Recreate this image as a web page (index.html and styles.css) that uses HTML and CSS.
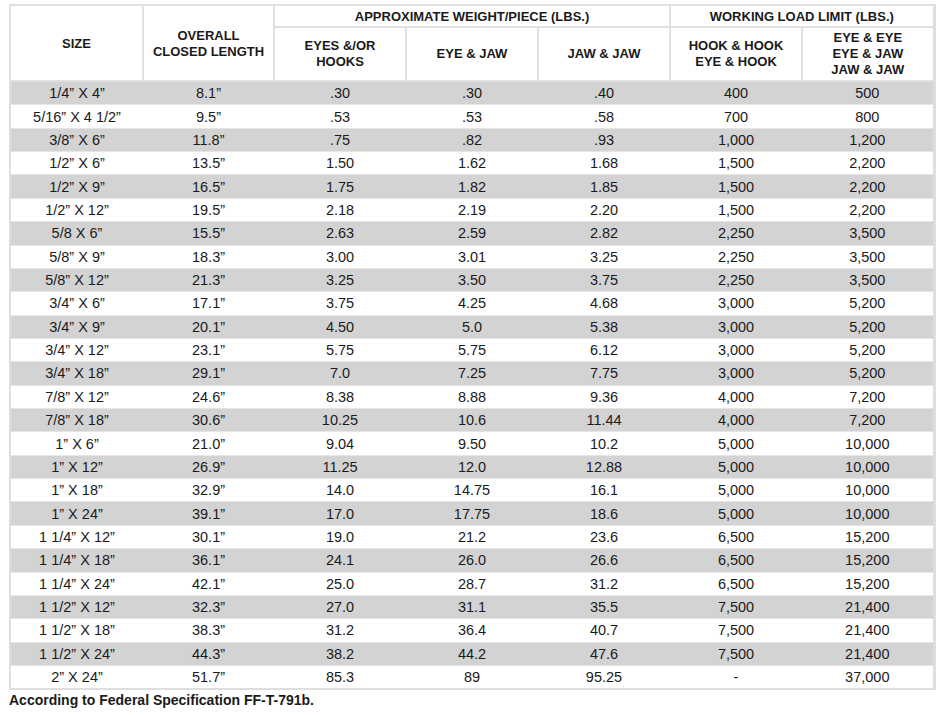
FILE: index.html
```html
<!DOCTYPE html>
<html>
<head>
<meta charset="utf-8">
<link rel="stylesheet" href="styles.css">
</head>
<body>
<table class="spec">
  <colgroup>
    <col class="c-size"><col class="c-len"><col class="c-w"><col class="c-w"><col class="c-w"><col class="c-w"><col class="c-w">
  </colgroup>
  <thead>
    <tr class="h1">
      <th rowspan="2">SIZE</th>
      <th rowspan="2">OVERALL<br>CLOSED LENGTH</th>
      <th colspan="3">APPROXIMATE WEIGHT/PIECE (LBS.)</th>
      <th colspan="2">WORKING LOAD LIMIT (LBS.)</th>
    </tr>
    <tr class="h2">
      <th>EYES &amp;/OR<br>HOOKS</th>
      <th>EYE &amp; JAW</th>
      <th>JAW &amp; JAW</th>
      <th>HOOK &amp; HOOK<br>EYE &amp; HOOK</th>
      <th>EYE &amp; EYE<br>EYE &amp; JAW<br>JAW &amp; JAW</th>
    </tr>
  </thead>
  <tbody>
    <tr><td>1/4” X 4”</td><td>8.1”</td><td>.30</td><td>.30</td><td>.40</td><td>400</td><td>500</td></tr>
    <tr><td>5/16” X 4 1/2”</td><td>9.5”</td><td>.53</td><td>.53</td><td>.58</td><td>700</td><td>800</td></tr>
    <tr><td>3/8” X 6”</td><td>11.8”</td><td>.75</td><td>.82</td><td>.93</td><td>1,000</td><td>1,200</td></tr>
    <tr><td>1/2” X 6”</td><td>13.5”</td><td>1.50</td><td>1.62</td><td>1.68</td><td>1,500</td><td>2,200</td></tr>
    <tr><td>1/2” X 9”</td><td>16.5”</td><td>1.75</td><td>1.82</td><td>1.85</td><td>1,500</td><td>2,200</td></tr>
    <tr><td>1/2” X 12”</td><td>19.5”</td><td>2.18</td><td>2.19</td><td>2.20</td><td>1,500</td><td>2,200</td></tr>
    <tr><td>5/8 X 6”</td><td>15.5”</td><td>2.63</td><td>2.59</td><td>2.82</td><td>2,250</td><td>3,500</td></tr>
    <tr><td>5/8” X 9”</td><td>18.3”</td><td>3.00</td><td>3.01</td><td>3.25</td><td>2,250</td><td>3,500</td></tr>
    <tr><td>5/8” X 12”</td><td>21.3”</td><td>3.25</td><td>3.50</td><td>3.75</td><td>2,250</td><td>3,500</td></tr>
    <tr><td>3/4” X 6”</td><td>17.1”</td><td>3.75</td><td>4.25</td><td>4.68</td><td>3,000</td><td>5,200</td></tr>
    <tr><td>3/4” X 9”</td><td>20.1”</td><td>4.50</td><td>5.0</td><td>5.38</td><td>3,000</td><td>5,200</td></tr>
    <tr><td>3/4” X 12”</td><td>23.1”</td><td>5.75</td><td>5.75</td><td>6.12</td><td>3,000</td><td>5,200</td></tr>
    <tr><td>3/4” X 18”</td><td>29.1”</td><td>7.0</td><td>7.25</td><td>7.75</td><td>3,000</td><td>5,200</td></tr>
    <tr><td>7/8” X 12”</td><td>24.6”</td><td>8.38</td><td>8.88</td><td>9.36</td><td>4,000</td><td>7,200</td></tr>
    <tr><td>7/8” X 18”</td><td>30.6”</td><td>10.25</td><td>10.6</td><td>11.44</td><td>4,000</td><td>7,200</td></tr>
    <tr><td>1” X 6”</td><td>21.0”</td><td>9.04</td><td>9.50</td><td>10.2</td><td>5,000</td><td>10,000</td></tr>
    <tr><td>1” X 12”</td><td>26.9”</td><td>11.25</td><td>12.0</td><td>12.88</td><td>5,000</td><td>10,000</td></tr>
    <tr><td>1” X 18”</td><td>32.9”</td><td>14.0</td><td>14.75</td><td>16.1</td><td>5,000</td><td>10,000</td></tr>
    <tr><td>1” X 24”</td><td>39.1”</td><td>17.0</td><td>17.75</td><td>18.6</td><td>5,000</td><td>10,000</td></tr>
    <tr><td>1 1/4” X 12”</td><td>30.1”</td><td>19.0</td><td>21.2</td><td>23.6</td><td>6,500</td><td>15,200</td></tr>
    <tr><td>1 1/4” X 18”</td><td>36.1”</td><td>24.1</td><td>26.0</td><td>26.6</td><td>6,500</td><td>15,200</td></tr>
    <tr><td>1 1/4” X 24”</td><td>42.1”</td><td>25.0</td><td>28.7</td><td>31.2</td><td>6,500</td><td>15,200</td></tr>
    <tr><td>1 1/2” X 12”</td><td>32.3”</td><td>27.0</td><td>31.1</td><td>35.5</td><td>7,500</td><td>21,400</td></tr>
    <tr><td>1 1/2” X 18”</td><td>38.3”</td><td>31.2</td><td>36.4</td><td>40.7</td><td>7,500</td><td>21,400</td></tr>
    <tr><td>1 1/2” X 24”</td><td>44.3”</td><td>38.2</td><td>44.2</td><td>47.6</td><td>7,500</td><td>21,400</td></tr>
    <tr><td>2” X 24”</td><td>51.7”</td><td>85.3</td><td>89</td><td>95.25</td><td>-</td><td>37,000</td></tr>
  </tbody>
</table>
<p class="note">According to Federal Specification FF-T-791b.</p>
</body>
</html>
```

FILE: styles.css
```css
html, body {
  margin: 0;
  padding: 0;
  background: #ffffff;
}

body {
  font-family: "Liberation Sans", Arial, Helvetica, sans-serif;
  color: #1b1a1a;
}

.spec {
  margin: 4px 0 0 9px;
  border-collapse: collapse;
  table-layout: fixed;
  width: 924px;
  border: 2px solid #dedede;
  border-right-width: 3px;
}

.c-size { width: 133px; }
.c-len { width: 131px; }
.c-w { width: 132px; }

.spec th {
  font-weight: bold;
  font-size: 13px;
  line-height: 16px;
  text-align: center;
  vertical-align: middle;
  padding: 0 2px;
  border: 2px solid #e0e0e0;
  background: #ffffff;
}

.h1 { height: 22px; }
.h1 th { padding-top: 1px; }
.h2 { height: 54px; }

.spec td {
  font-size: 14.5px;
  text-align: center;
  vertical-align: middle;
  height: 22.36px;
  padding: 0;
  line-height: 16px;
  border-top: 1px solid #e6e6e6;
}

.spec tbody tr:nth-child(odd) td {
  background: #d3d3d4;
}

.spec tbody tr:first-child td {
  border-top: 2px solid #e0e0e0;
}

.note {
  margin: 2px 0 0 9px;
  font-size: 14px;
  font-weight: bold;
  line-height: 16px;
}
```
